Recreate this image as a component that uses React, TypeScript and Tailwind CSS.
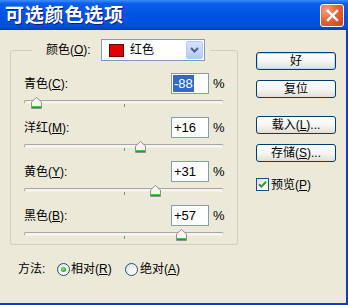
import React from "react";

function Mn({ text, k, tail = "" }: { text: string; k: string; tail?: string }) {
  return (
    <span>
      {text}(<u className="underline-offset-[1px]">{k}</u>){tail}
    </span>
  );
}

function Thumb({ value }: { value: number }) {
  return (
    <svg
      className="absolute top-[3px]"
      style={{ left: value + 100 - 5 }}
      width="11"
      height="12"
      viewBox="0 0 11 12"
    >
      <path d="M0.5 11.5 V5 L5.5 0.5 L10.5 5 V11.5 Z" fill="#F4F4F0" stroke="#8E8F8F" />
      <path d="M1.5 5.4 L5.5 1.8" stroke="#FFFFFF" />
      <rect x="1" y="9" width="9" height="2" fill="#21A121" />
      <rect x="1" y="9" width="9" height="1" fill="#4CC24C" />
    </svg>
  );
}

function Slider({ value }: { value: number }) {
  return (
    <div className="relative h-[15px] w-[200px]">
      <div className="absolute left-0 right-0 top-[6px] h-[4px] rounded-[2px] border border-[#A7A69C] border-b-[#F0F0EA] border-r-[#DCDBD2] bg-[#F6F5EF]" />
      <div className="absolute left-[100px] top-[10px] h-[3px] w-px bg-[#8D8C85]" />
      <Thumb value={value} />
    </div>
  );
}

function Row({
  label,
  k,
  value,
  selected,
}: {
  label: string;
  k: string;
  value: number;
  selected?: boolean;
}) {
  const txt = value > 0 ? "+" + value : String(value);
  return (
    <div className="flex flex-col">
      <div className="flex h-[21px] w-[200px] items-center">
        <div className="flex-1 text-[12px]">
          <Mn text={label} k={k} tail=":" />
        </div>
        <div className="flex h-[21px] w-[38px] items-center border border-[#7F9DB9] bg-white px-[1px] text-[13px]">
          {selected ? (
            <span className="bg-[#316AC5] px-[1px] leading-[17px] text-white">{txt}</span>
          ) : (
            <span className="pl-[1px]">{txt}</span>
          )}
        </div>
        <span className="ml-[4px] w-[11px] text-[13px]">%</span>
      </div>
      <Slider value={value} />
    </div>
  );
}

function Btn({ children, def }: { children: React.ReactNode; def?: boolean }) {
  return (
    <div
      className={
        def
          ? "flex h-[18px] w-[80px] items-center justify-center rounded-[3px] border border-[#003C74] bg-[linear-gradient(180deg,#FFFFFF_0%,#F4F4F0_55%,#E0DFD6_100%)] text-[12px] shadow-[inset_0_0_0_1px_#C2D7F5]"
          : "flex h-[18px] w-[80px] items-center justify-center rounded-[3px] border border-[#003C74] bg-[linear-gradient(180deg,#FFFFFF_0%,#F4F4F0_55%,#E0DFD6_100%)] text-[12px]"
      }
    >
      {children}
    </div>
  );
}

function Radio({ on }: { on?: boolean }) {
  return (
    <div className="flex h-[13px] w-[13px] items-center justify-center rounded-full border border-[#1C5180] bg-[linear-gradient(135deg,#DCDCD5_0%,#F4F4F0_50%,#FFFFFF_100%)]">
      {on && (
        <div className="h-[5px] w-[5px] rounded-full bg-[radial-gradient(circle_at_40%_40%,#8CE38A_0%,#2DAF2B_60%,#1E8F1C_100%)]" />
      )}
    </div>
  );
}

export default function App() {
  return (
    <div className="flex h-[305px] w-[348px] flex-col overflow-hidden bg-[#ECE9D8] font-['Liberation_Sans','Noto_Sans_CJK_SC',sans-serif] text-black">
      {/* title bar */}
      <div className="flex h-[30px] shrink-0 items-center justify-between bg-[linear-gradient(180deg,#3D8EFB_0%,#0A5FE8_12%,#0054E3_45%,#0050DA_85%,#003FBF_100%)] pl-[5px] pr-[4px]">
        <span className="text-[19px] font-bold leading-none tracking-[0.8px] text-white [text-shadow:1px_1px_#0F1A8A]">
          可选颜色选项
        </span>
        <div className="flex h-[23px] w-[24px] items-center justify-center rounded-[3px] border border-white bg-[radial-gradient(circle_at_25%_25%,#F4A284_0%,#E5643C_45%,#C9441E_100%)]">
          <svg width="13" height="13" viewBox="0 0 13 13">
            <path d="M2 2 L11 11 M11 2 L2 11" stroke="#FFFFFF" strokeWidth="2.4" strokeLinecap="square" />
          </svg>
        </div>
      </div>

      {/* body */}
      <div className="flex flex-1 items-start border-b-2 border-r-2 border-[#0B3BD6]">
        <div className="flex flex-col pl-[10px] pt-[9px]">
          <fieldset className="w-[228px] rounded-[3px] border border-[#D0D0BF] pb-[3px] pl-[13px] pt-[12px]">
            <legend className="ml-[8px] pl-[14px] pr-[5px]">
              <div className="flex items-center">
                <span className="w-[55px] text-[12px]">
                  <Mn text="颜色" k="O" tail=":" />
                </span>
                <div className="flex h-[22px] w-[104px] items-center border border-[#7F9DB9] bg-white">
                  <div className="ml-[7px] h-[13px] w-[15px] border border-[#6A0000] bg-[#E20000]" />
                  <span className="ml-[6px] flex-1 text-[12px]">红色</span>
                  <div className="mr-[1px] flex h-[18px] w-[17px] items-center justify-center rounded-[2px] border border-[#BACBF1] bg-[linear-gradient(180deg,#D6E2FC_0%,#C2D4FA_60%,#B2C8F6_100%)]">
                    <svg width="9" height="6" viewBox="0 0 9 6">
                      <path d="M1 1 L4.5 4.5 L8 1" fill="none" stroke="#4D6185" strokeWidth="2" />
                    </svg>
                  </div>
                </div>
              </div>
            </legend>
            <div className="flex flex-col gap-[8px]">
              <Row label="青色" k="C" value={-88} selected />
              <Row label="洋红" k="M" value={16} />
              <Row label="黄色" k="Y" value={31} />
              <Row label="黑色" k="B" value={57} />
            </div>
          </fieldset>

          <div className="mt-[16px] flex h-[16px] items-center text-[12px]">
            <span className="ml-[8px] w-[39px]">方法:</span>
            <Radio on />
            <span className="ml-[1px] w-[54px]">
              <Mn text="相对" k="R" />
            </span>
            <Radio />
            <span className="ml-[2px]">
              <Mn text="绝对" k="A" />
            </span>
          </div>
        </div>

        <div className="ml-[18px] flex flex-col pt-[22px]">
          <Btn def>好</Btn>
          <div className="mt-[10px]">
            <Btn>复位</Btn>
          </div>
          <div className="mt-[18px]">
            <Btn>
              <Mn text="载入" k="L" tail="..." />
            </Btn>
          </div>
          <div className="mt-[10px]">
            <Btn>
              <Mn text="存储" k="S" tail="..." />
            </Btn>
          </div>
          <div className="mt-[16px] flex h-[13px] items-center text-[12px]">
            <div className="flex h-[13px] w-[13px] items-center justify-center border border-[#1C5180] bg-[linear-gradient(135deg,#DCDCD5_0%,#F4F4F0_50%,#FFFFFF_100%)]">
              <svg width="9" height="9" viewBox="0 0 9 9">
                <path d="M1 4.2 L3.4 6.6 L8 1.8" fill="none" stroke="#21A121" strokeWidth="2" />
              </svg>
            </div>
            <span className="ml-[2px]">
              <Mn text="预览" k="P" />
            </span>
          </div>
        </div>
      </div>
    </div>
  );
}
